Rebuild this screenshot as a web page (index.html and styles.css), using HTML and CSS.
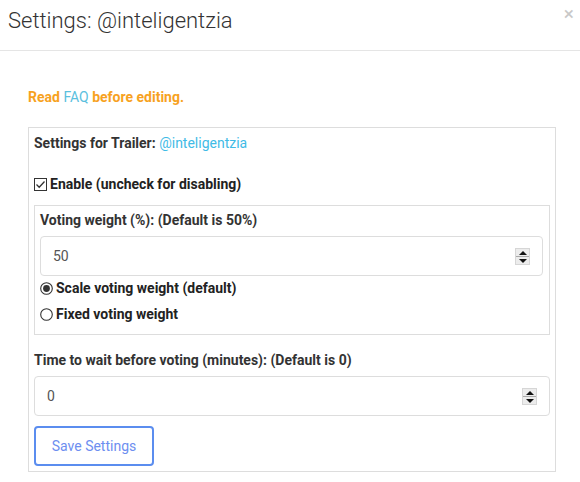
FILE: index.html
```html
<!DOCTYPE html>
<html>
<head>
<meta charset="utf-8">
<link rel="stylesheet" href="styles.css">
</head>
<body>
<div class="modal">
  <div class="modal-header">
    <h4 class="modal-title">Settings: @inteligentzia</h4>
    <span class="close">×</span>
  </div>
  <div class="modal-body">
    <p class="notice">Read <a class="faq">FAQ</a> before editing.</p>
    <div class="panel">
      <div class="row-title">Settings for Trailer: <a class="user">@inteligentzia</a></div>
      <label class="check-line">
        <svg class="cb" width="13" height="13" viewBox="0 0 13 13"><rect x="0.5" y="0.5" width="12" height="12" fill="#fff" stroke="#333"/><path d="M2.5 6.5 L5.2 9.2 L10.5 3.5" fill="none" stroke="#333" stroke-width="1.3"/></svg>
        <span>Enable (uncheck for disabling)</span>
      </label>
      <div class="subpanel">
        <div class="label">Voting weight (%): (Default is 50%)</div>
        <div class="field">
          <span class="val">50</span>
          <span class="spin"><span class="up"></span><span class="down"></span></span>
        </div>
        <label class="radio-line">
          <svg width="13" height="13" viewBox="0 0 13 13"><circle cx="6.5" cy="6.5" r="5.8" fill="#fff" stroke="#333" stroke-width="1.1"/><circle cx="6.5" cy="6.5" r="3.4" fill="#333"/></svg>
          <span>Scale voting weight (default)</span>
        </label>
        <label class="radio-line second">
          <svg width="13" height="13" viewBox="0 0 13 13"><circle cx="6.5" cy="6.5" r="5.8" fill="#fff" stroke="#333" stroke-width="1.1"/></svg>
          <span>Fixed voting weight</span>
        </label>
      </div>
      <div class="label time-label">Time to wait before voting (minutes): (Default is 0)</div>
      <div class="field">
        <span class="val">0</span>
        <span class="spin"><span class="up"></span><span class="down"></span></span>
      </div>
      <button class="save">Save Settings</button>
    </div>
  </div>
</div>
</body>
</html>
```

FILE: styles.css
```css
* { box-sizing: border-box; }
body {
  margin: 0;
  background: #fff;
  font-family: Roboto, "Noto Sans", sans-serif;
  font-size: 14px;
  color: #333;
}
.modal-header {
  display: flex;
  justify-content: space-between;
  align-items: flex-start;
  height: 51px;
  border-bottom: 1px solid #e5e5e5;
  padding: 6px 6px 0 8px;
}
.modal-title {
  margin: 0;
  font-size: 22px;
  font-weight: 300;
  line-height: 30px;
  color: #333;
}
.close {
  font-size: 19px;
  line-height: 19px;
  color: #c8c8c8;
  margin-top: -2px;
}
.modal-body {
  padding: 0 24px 0 28px;
}
.notice {
  margin: 36px 0 20px 0;
  line-height: 20px;
  font-weight: 700;
  color: #f7a21f;
}
.faq { color: #5bc0de; font-weight: 400; }
.user { color: #3fbbe6; font-weight: 400; }
.panel {
  border: 1px solid #ddd;
  padding: 5px 5px 5px 5px;
}
.row-title {
  line-height: 20px;
  font-weight: 700;
}
.check-line {
  display: flex;
  align-items: center;
  gap: 3px;
  margin-top: 21px;
  line-height: 20px;
  font-weight: 700;
  color: #222;
}
.subpanel {
  margin-top: 11px;
  border: 1px solid #ddd;
  padding: 4px 5px 10px 5px;
}
.label {
  line-height: 20px;
  font-weight: 700;
}
.field {
  margin-top: 6px;
  height: 40px;
  border: 1px solid #ddd;
  border-radius: 4px;
  display: flex;
  align-items: center;
  justify-content: space-between;
  padding: 0 12px 0 12px;
  color: #555;
}
.subpanel .field { margin-right: 1px; }
.spin {
  display: flex;
  flex-direction: column;
  width: 15px;
  height: 17px;
  border: 1px solid #d6d6d6;
  background: #ececec;
}
.spin .up, .spin .down {
  flex: 1;
  position: relative;
}
.spin .up { border-bottom: 1px solid #a9a9a9; }
.spin .up::after, .spin .down::after {
  content: "";
  position: absolute;
  left: 3px;
  border-left: 4px solid transparent;
  border-right: 4px solid transparent;
}
.spin .up::after { top: 2px; border-bottom: 4px solid #111; }
.spin .down::after { top: 2px; border-top: 4px solid #111; }
.radio-line {
  display: flex;
  align-items: center;
  gap: 3px;
  margin-top: 2px;
  line-height: 20px;
  font-weight: 700;
  color: #222;
}
.radio-line.second { margin-top: 6px; }
.time-label { margin-top: 15px; }
.save {
  display: block;
  margin-top: 10px;
  height: 40px;
  width: 120px;
  border: 2px solid #5b8def;
  border-radius: 4px;
  background: #fff;
  color: #6d8ef0;
  font-family: Roboto, sans-serif;
  font-size: 14px;
  padding: 0;
}
```
